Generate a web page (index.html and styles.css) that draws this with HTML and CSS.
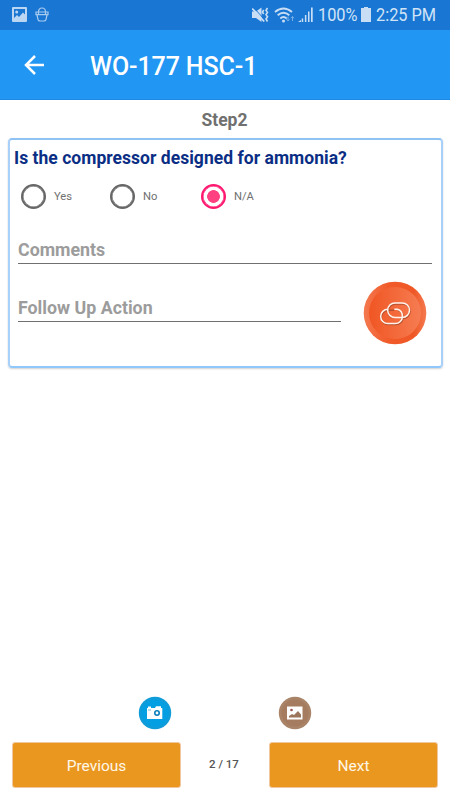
FILE: index.html
```html
<!DOCTYPE html>
<html lang="en">
<head>
<meta charset="utf-8">
<title>WO-177 HSC-1</title>
<link rel="stylesheet" href="styles.css">
</head>
<body>
<div class="screen">
  <div class="status">
    <svg class="status-left" width="40" height="16" viewBox="0 0 40 16">
      <path fill="#bbd6f2" fill-rule="evenodd" d="M1 0h13a1 1 0 0 1 1 1v13a1 1 0 0 1-1 1H1a1 1 0 0 1-1-1V1a1 1 0 0 1 1-1zM2 2v9l3-3 2 2 4-4.500 2 2V2zM4.700 3.500a1.500 1.500 0 1 1 0 3 1.500 1.500 0 0 1 0-3z"/>
      <path fill="none" stroke="#a9cbef" stroke-width="1.200" d="M24 5h12v2.700H24zM25 8l1 4.500q.4 1.500 2 1.500h4q1.600 0 2-1.500L35 8M26.500 7.500V5Q26.500 1 30 1t3.500 4v2.500"/>
    </svg>
    <svg class="status-icons" width="62" height="18" viewBox="0 0 62 18">
      <path fill="#c9def5" d="M0 4.500h4L9.500.5V15L4 11H0z"/>
      <path stroke="#1976d2" stroke-width="1" d="M1.500 .5l11 12"/>
      <path stroke="#c9def5" stroke-width="1.800" d="M.2 1.500l12 13"/>
      <path fill="none" stroke="#c9def5" stroke-width="1.600" d="M11.700 3L10.500 5.200 11.700 7M15.500 1L14 3.200l1.500 2.200L14 7.600l1.500 2.200L14 12l1.500 2.500"/>
      <path fill="none" stroke="#c9def5" stroke-width="1.900" d="M23 5q8.500-7 17 0M25.700 8.300q5.800-5 11.600 0M28.300 11.500q3.200-2.800 6.400 0"/>
      <circle cx="31.500" cy="14" r="1.500" fill="#c9def5"/>
      <path fill="none" stroke="#75afe8" d="M36 9.500V14M34.500 12.300l1.500 1.700 1.500-1.700M40.500 14V9.500M39 11.200l1.500-1.700 1.500 1.700"/>
      <path fill="#c9def5" d="M46 15l3-2v2h-3zM49.700 11.500h1.500V15h-1.500zM52.900 8h1.500v7h-1.500zM56 4.500h1.500V15H56zM59 .5h1.700V15H59z"/>
    </svg>
    <span class="battery-text"><span>100%</span></span>
    <svg class="battery" width="10" height="15" viewBox="0 0 10 15"><path fill="#c9def5" d="M3 0h4v1h3v14H0V1h3z"/></svg>
    <span class="clock"><span>2:25 PM</span></span>
  </div>
  <header class="toolbar">
    <svg class="back" width="20" height="20" viewBox="0 0 20 20"><path fill="none" stroke="#fff" stroke-width="2.500" d="M20 10H2M11 1L2 10l9 9"/></svg>
    <h1>WO-177 HSC-1</h1>
  </header>
  <div class="step">Step2</div>
  <main class="card">
    <div class="question">Is the compressor designed for ammonia?</div>
    <div class="options">
      <div class="option"><span class="radio"></span>Yes</div>
      <div class="option"><span class="radio"></span>No</div>
      <div class="option"><span class="radio checked"></span>N/A</div>
    </div>
    <div class="field">Comments</div>
    <div class="follow">
      <div class="field action">Follow Up Action</div>
      <svg class="link" width="64" height="64" viewBox="0 0 64 64">
        <defs>
          <linearGradient id="rim"><stop stop-color="#f4794f"/><stop offset=".4" stop-color="#f15a29"/><stop offset=".8" stop-color="#ef5826"/><stop offset="1" stop-color="#f47a50"/></linearGradient>
          <linearGradient id="face"><stop stop-color="#f05623"/><stop offset="1" stop-color="#f67c52"/></linearGradient>
        </defs>
        <circle cx="32" cy="32" r="31.300" fill="url(#rim)"/>
        <circle cx="32" cy="32" r="26" fill="url(#face)"/>
        <g fill="none" stroke="#fff3ec" stroke-width="1.500">
          <g stroke="#b5502e" transform="translate(.6 1)">
            <path d="M37 36.500h2.200a7.300 7.300 0 0 0 0-14.600H32a7.300 7.300 0 0 0-7.300 7.300q0 4.800 4 6.600"/>
            <path d="M30.500 28.300h-5.700a7.100 7.100 0 0 0 0 14.200h7.500a7.100 7.100 0 0 0 7.100-7.100q0-5.600-5-7.100"/>
          </g>
          <path d="M32 36.500h7.200a7.300 7.300 0 0 0 0-14.600H32a7.300 7.300 0 0 0 0 14.600"/>
          <path d="M24.800 28.300a7.100 7.100 0 0 0 0 14.200h7.500a7.100 7.100 0 0 0 7.100-7.100q0-5.600-5-7.100h-3"/>
        </g>
      </svg>
    </div>
  </main>
  <div class="media">
    <svg width="34" height="34" viewBox="0 0 34 34">
      <circle cx="17" cy="17" r="16.200" fill="#109bd9"/><circle cx="17" cy="17" r="13.500" fill="#049fe3"/>
      <path fill="#fff" d="M9 12h1v-1.500h3V12h4l1-1.800h5V12h1.300v11H9z"/>
      <circle cx="19" cy="17" r="2.200" fill="#fff" stroke="#087db9" stroke-width="1.600"/><path fill="#79bedf" d="M10 13.500h3v1h-3z"/>
    </svg>
    <svg width="34" height="34" viewBox="0 0 34 34">
      <circle cx="17" cy="17" r="16.200" fill="#aa8468"/><circle cx="17" cy="17" r="13.500" fill="#a57c60"/>
      <path fill="#fff" d="M9 10.500h15.500v13H9z"/>
      <path fill="#9b765d" d="M11 21.500v-1.500l3-2 2 1 4-4 3 3.500v3z"/><circle cx="13.500" cy="14" r="1.300" fill="#9b514c"/>
    </svg>
  </div>
  <footer class="pager">
    <div class="button">Previous</div>
    <div class="count">2 / 17</div>
    <div class="button">Next</div>
  </footer>
</div>
</body>
</html>
```
FILE: styles.css
```css
* { box-sizing: border-box; }
body { margin: 0; background: #fff; font-family: Roboto, sans-serif; }
.screen { width: 450px; height: 800px; display: flex; flex-direction: column; overflow: hidden; }
.status { height: 30px; flex: none; display: flex; align-items: flex-start; padding-left: 12px; background: #1976d2; color: #d1e4f7; font-size: 19px; line-height: 30px; white-space: nowrap; }
.status-left { margin-top: 7px; }
.status-icons { margin: 7px 0 0 200px; }
.battery-text { width: 43px; margin-left: 4px; }
.battery-text span, .clock span { display: inline-block; transform: scaleX(.86); transform-origin: left; }
.battery { margin-top: 7px; }
.clock { margin-left: 5px; width: 64px; }
.toolbar { height: 70px; flex: none; display: flex; align-items: center; padding: 1px 0 0 24px; background: #2196f3; border-bottom: 1px solid #1e88e5; color: #fff; }
.back { margin-top: -1px; }
h1 { margin: 4px 0 0 46px; font-size: 25px; font-weight: 500; line-height: 32px; letter-spacing: -.1px; white-space: nowrap; }
.step { height: 38px; flex: none; padding-right: 1px; text-align: center; color: #707070; font-size: 17.500px; line-height: 41px; font-weight: 700; }
.card { height: 230px; flex: none; margin: 0 7px 0 8px; padding: 0 9px 0 8px; border: 2px solid #a8d0f8; border-top-color: #8fc3f3; border-bottom-color: #90c8fc; border-radius: 4px; box-shadow: 0 1px 2px #d0d0d0; }
.question { margin: 6px 0 0 -4px; height: 24px; color: #0b2e85; font-size: 17.500px; line-height: 24px; font-weight: 700; letter-spacing: .03px; white-space: nowrap; }
.options { display: flex; height: 56px; padding: 0 0 4px 3px; align-items: center; color: #707070; font-size: 11.200px; }
.option { width: 89px; display: flex; align-items: center; gap: 8px; }
.option:nth-child(2) { width: 91px; }
.radio { width: 25px; height: 25px; border: 2.500px solid #666; border-radius: 50%; flex: none; box-shadow: inset 0 0 0 .5px #666; }
.checked { border-color: #ff176f; background: radial-gradient(circle, #ff4081 6px, transparent 6.700px); box-shadow: inset 0 0 0 .5px #ff176f; }
.field { height: 38px; border-bottom: 1px solid #707070; color: #9c9c9c; font-size: 17.800px; line-height: 48px; font-weight: 700; }
.follow { display: flex; justify-content: space-between; padding-right: 5px; }
.action { width: 323px; height: 58px; line-height: 88px; }
.link { margin-top: 17px; flex: none; }
.media { display: flex; justify-content: space-between; margin: auto 138px 12.500px; }
.pager { display: flex; flex: none; height: 46px; margin: 0 12px 12px; align-items: center; justify-content: space-between; }
.button { width: 169px; height: 46px; border: 1px solid #f1c7a0; border-radius: 3px; background: #ea9720; color: #fff8e9; font-size: 15.500px; line-height: 46px; text-align: center; }
.count { color: #555; font-size: 11.500px; font-weight: 500; white-space: nowrap; margin: -2px 2px 0 0; }
```
